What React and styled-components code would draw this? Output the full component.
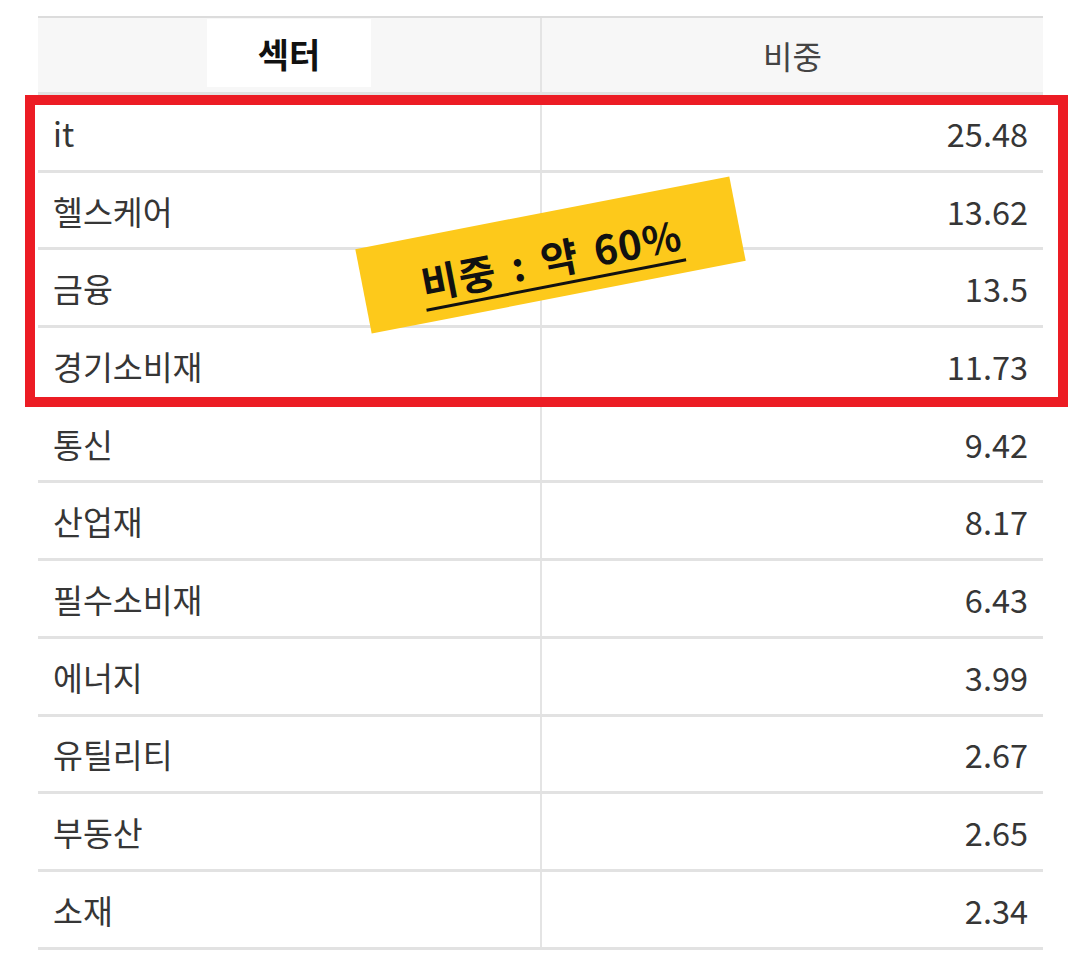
import React from 'react';
import styled, {createGlobalStyle} from 'styled-components';

const GlobalStyle = createGlobalStyle`
  html, body {
    margin: 0;
    padding: 0;
    background: #fff;
  }
  body {
    font-family: "Noto Sans CJK KR", "Noto Sans", sans-serif;
  }
`;

const sectors = [
  {name: 'it', weight: '25.48'},
  {name: '헬스케어', weight: '13.62'},
  {name: '금융', weight: '13.5'},
  {name: '경기소비재', weight: '11.73'},
  {name: '통신', weight: '9.42'},
  {name: '산업재', weight: '8.17'},
  {name: '필수소비재', weight: '6.43'},
  {name: '에너지', weight: '3.99'},
  {name: '유틸리티', weight: '2.67'},
  {name: '부동산', weight: '2.65'},
  {name: '소재', weight: '2.34'},
];

const Page = styled.div`
  position: relative;
  width: 1080px;
  height: 968px;
  padding: 16px 0 0 38px;
  box-sizing: border-box;
  overflow: hidden;
`;

const Table = styled.div`
  width: 1005px;
  border-top: 2px solid #dcdcdc;
`;

const Row = styled.div`
  display: grid;
  grid-template-columns: 502px 1fr;
  height: ${(p) => (p.$header ? '77px' : '77.7px')};
  box-sizing: border-box;
  border-bottom: 3px solid #e2e2e2;
  background: ${(p) => (p.$header ? '#f7f7f7' : '#fff')};
`;

const Cell = styled.div`
  display: flex;
  align-items: center;
  justify-content: ${(p) => p.$align || 'flex-start'};
  padding: 0 15px 0 15px;
  font-size: 32.5px;
  color: #363636;
  border-left: ${(p) => (p.$divider ? '2px solid #e4e4e4' : 'none')};
`;

const HeaderCell = styled.div`
  display: flex;
  align-items: center;
  justify-content: center;
  font-size: 32px;
  color: #444;
  border-left: ${(p) => (p.$divider ? '2px solid #e4e4e4' : 'none')};
`;

const ActiveTab = styled.span`
  display: flex;
  align-items: center;
  justify-content: center;
  width: 164px;
  height: 68px;
  margin-bottom: 4px;
  background: #fff;
  font-size: 34px;
  font-weight: 700;
  color: #111;
`;

const Highlight = styled.div`
  position: absolute;
  left: 25px;
  top: 95px;
  width: 1043px;
  height: 312px;
  box-sizing: border-box;
  border: 10px solid #ec1c24;
  pointer-events: none;
`;

const Sticker = styled.div`
  position: absolute;
  left: 360px;
  top: 212px;
  width: 381px;
  height: 86px;
  display: flex;
  align-items: center;
  justify-content: center;
  background: #fdc91b;
  transform: rotate(-11deg);
  font-size: 40px;
  font-weight: 700;
  color: #111;
  letter-spacing: 1px;
  word-spacing: 6px;
`;

const StickerText = styled.span`
  text-decoration: underline;
  text-decoration-thickness: 3px;
  text-underline-offset: 9px;
  white-space: pre;
  margin-top: 6px;
`;

export default function App() {
  return (
    <>
      <GlobalStyle />
      <Page>
        <Table>
          <Row $header>
            <HeaderCell>
              <ActiveTab>섹터</ActiveTab>
            </HeaderCell>
            <HeaderCell $divider>비중</HeaderCell>
          </Row>
          {sectors.map((s) => (
            <Row key={s.name}>
              <Cell>{s.name}</Cell>
              <Cell $divider $align="flex-end">
                {s.weight}
              </Cell>
            </Row>
          ))}
        </Table>
        <Highlight />
        <Sticker>
          <StickerText>{'비중 : 약 60%'}</StickerText>
        </Sticker>
      </Page>
    </>
  );
}
